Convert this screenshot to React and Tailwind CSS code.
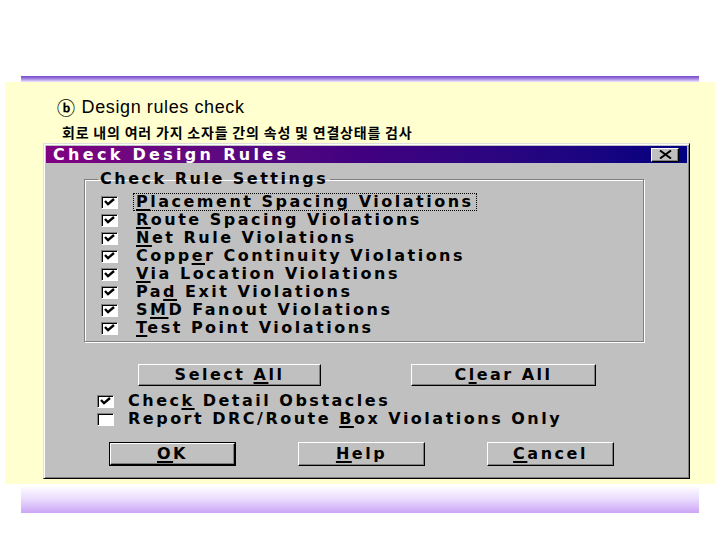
import React from 'react';

// --- WIN95 STYLE PIECES ---
const font = "font-['DejaVu_Sans',sans-serif] font-bold tracking-[2.5px] text-[16px] text-black";

const raised =
  "bg-[#c0c0c0] border border-t-white border-l-white border-r-black border-b-black shadow-[inset_-1px_-1px_0_#808080]";

function U({ children }) {
  return <span className="underline underline-offset-[2px] decoration-[1.5px]">{children}</span>;
}

function Box({ checked }) {
  return (
    <span className="w-[17px] h-[13px] bg-white border border-t-[#808080] border-l-[#808080] border-r-white border-b-white shadow-[inset_1px_1px_0_#000] flex items-center justify-center shrink-0">
      {checked && (
        <svg width="11" height="8" viewBox="0 0 11 8">
          <path d="M1 3 L4 6.2 L10 1" stroke="#000" strokeWidth="2.4" fill="none" />
        </svg>
      )}
    </span>
  );
}

function Row({ checked = true, children, focus, gap = "ml-[15px]" }) {
  return (
    <div className="h-[18px] flex items-center">
      <Box checked={checked} />
      <span
        className={`${gap} px-[3px] h-[18px] flex items-center leading-none whitespace-pre ${font} ${
          focus ? 'outline outline-1 outline-dotted outline-black -outline-offset-1' : ''
        }`}
      >
        <span>{children}</span>
      </span>
    </div>
  );
}

function Btn({ children, w, h = "h-[22px]", def }) {
  return (
    <div className={`${def ? 'border border-black' : ''}`}>
      <button className={`${raised} ${h} flex items-center justify-center whitespace-pre ${font} leading-none ${w}`}>
        <span>{children}</span>
      </button>
    </div>
  );
}

export default function App() {
  const rules = [
    <><U>P</U>lacement Spacing Violations</>,
    <><U>R</U>oute Spacing Violations</>,
    <><U>N</U>et Rule Violations</>,
    <>Copp<U>e</U>r Continuity Violations</>,
    <><U>V</U>ia Location Violations</>,
    <>Pa<U>d</U> Exit Violations</>,
    <>S<U>M</U>D Fanout Violations</>,
    <><U>T</U>est Point Violations</>,
  ];

  return (
    <div className="w-[720px] h-[540px] bg-white overflow-hidden flex flex-col">
      {/* top rule */}
      <div className="mt-[76px] mx-[21px] h-[6px] bg-gradient-to-b from-[#7446c8] via-[#a988e4] to-[#f0e8ff]" />

      {/* yellow slide body */}
      <div className="mx-[5px] h-[402px] bg-[#ffffd0] flex flex-col">
        <div className="mt-[14px] ml-[52px] h-[22px] flex items-center gap-[6px] text-[18px] tracking-[0.6px] leading-none text-black font-['Liberation_Sans',sans-serif]">
          <span className="font-['Noto_Sans_CJK_KR',sans-serif] text-[18px] leading-none font-bold">ⓑ</span>
          <span>Design rules check</span>
        </div>
        <div className="mt-[4px] ml-[57px] h-[20px] text-[14px] leading-[20px] font-bold tracking-[0.8px] text-black font-['Noto_Sans_CJK_KR',sans-serif]">
          회로 내의 여러 가지 소자들 간의 속성 및 연결상태를 검사
        </div>

        {/* dialog */}
        <div className="mt-[1px] ml-[38px] w-[647px] h-[336px] bg-[#c0c0c0] border border-t-[#dfdfdf] border-l-[#dfdfdf] border-r-black border-b-black shadow-[inset_1px_1px_0_white,inset_-1px_-1px_0_#808080] p-[2px] flex flex-col">
          <div className="h-[17px] shrink-0 bg-gradient-to-r from-[#800080] via-[#400080] to-[#000080] flex items-center pl-[7px] pr-[8px]">
            <span className="text-white font-['DejaVu_Sans',sans-serif] font-bold text-[16px] tracking-[3.3px] leading-none">
              Check Design Rules
            </span>
            <div className={`${raised} ml-auto w-[28px] h-[14px] flex items-center justify-center`}>
              <svg width="13" height="9" viewBox="0 0 13 9">
                <path d="M1 0.5 L12 8.5 M12 0.5 L1 8.5" stroke="#000" strokeWidth="2" />
              </svg>
            </div>
          </div>

          <fieldset className="mt-[7px] ml-[38px] w-[560px] border border-[#808080] shadow-[inset_1px_1px_0_white,1px_1px_0_white] px-0 pt-[5px] pb-[4px]">
            <legend className={`ml-[13px] px-[2px] h-[18px] leading-[18px] ${font}`}>Check Rule Settings</legend>
            <div className="pl-[16px] flex flex-col">
              {rules.map((r, i) => (
                <Row key={i} focus={i === 0}>{r}</Row>
              ))}
            </div>
          </fieldset>

          <div className="mt-[22px] ml-[92px] flex gap-[90px]">
            <Btn w="w-[183px]">Select <U>A</U>ll</Btn>
            <Btn w="w-[185px]">C<U>l</U>ear All</Btn>
          </div>

          <div className="mt-[6px] ml-[51px] flex flex-col">
            <Row gap="ml-[11px]">Chec<U>k</U> Detail Obstacles</Row>
            <Row gap="ml-[11px]" checked={false}>Report DRC/Route <U>B</U>ox Violations Only</Row>
          </div>

          <div className="mt-[14px] ml-[63px] flex gap-[62px]">
            <Btn w="w-[125px]" h="h-[22px]" def><U>O</U>K</Btn>
            <Btn w="w-[127px]" h="h-[24px]"><U>H</U>elp</Btn>
            <Btn w="w-[127px]" h="h-[24px]"><U>C</U>ancel</Btn>
          </div>
        </div>
      </div>

      {/* bottom rule */}
      <div className="mt-[3px] mx-[21px] h-[26px] bg-gradient-to-b from-[#fdfbff] via-[#e8d8fc] to-[#cca4f6]" />
    </div>
  );
}
